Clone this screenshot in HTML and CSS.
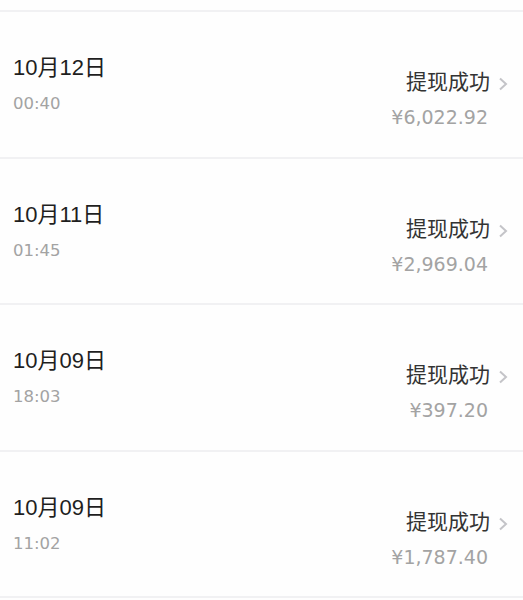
FILE: index.html
```html
<!DOCTYPE html>
<html lang="zh-CN">
<head>
  <meta charset="UTF-8" />
  <meta name="viewport" content="width=device-width, initial-scale=1" />
  <title>提现记录</title>
  <link rel="stylesheet" href="styles.css">
</head>
<body>
  <ul class="records">
    <li class="record">
      <div class="when">
        <p class="date">10月12日</p>
        <p class="time">00:40</p>
      </div>
      <div class="what">
        <p class="status">提现成功<svg class="arrow" viewBox="0 0 10 14"><path d="M2 1.5 L8 7 L2 12.5" /></svg></p>
        <p class="amount">¥6,022.92</p>
      </div>
    </li>
    <li class="record">
      <div class="when">
        <p class="date">10月11日</p>
        <p class="time">01:45</p>
      </div>
      <div class="what">
        <p class="status">提现成功<svg class="arrow" viewBox="0 0 10 14"><path d="M2 1.5 L8 7 L2 12.5" /></svg></p>
        <p class="amount">¥2,969.04</p>
      </div>
    </li>
    <li class="record">
      <div class="when">
        <p class="date">10月09日</p>
        <p class="time">18:03</p>
      </div>
      <div class="what">
        <p class="status">提现成功<svg class="arrow" viewBox="0 0 10 14"><path d="M2 1.5 L8 7 L2 12.5" /></svg></p>
        <p class="amount">¥397.20</p>
      </div>
    </li>
    <li class="record">
      <div class="when">
        <p class="date">10月09日</p>
        <p class="time">11:02</p>
      </div>
      <div class="what">
        <p class="status">提现成功<svg class="arrow" viewBox="0 0 10 14"><path d="M2 1.5 L8 7 L2 12.5" /></svg></p>
        <p class="amount">¥1,787.40</p>
      </div>
    </li>
  </ul>
</body>
</html>
```

FILE: styles.css
```css
body {
  margin: 0;
  background: #fefefe;
  color: #333;
  font-family: "Liberation Sans", "Noto Sans CJK SC", sans-serif;
}
p {
  margin: 0;
}
.records {
  list-style: none;
  margin: 10px 0 0;
  padding: 0;
  border-top: 2px solid #f1f1f3;
}
.record {
  display: flex;
  justify-content: space-between;
  height: 146.5px;
  padding: 42px 15px 0 13px;
  box-sizing: border-box;
  border-bottom: 2px solid #f1f1f3;
}
.date {
  font-size: 22px;
  line-height: 28px;
  color: #1f1f1f;
}
.time {
  font-family: "DejaVu Sans", "Noto Sans CJK SC", sans-serif;
  font-size: 16.5px;
  line-height: 28px;
  margin-top: 8px;
  color: #a3a3a3;
}
.what {
  margin-top: 14px;
  text-align: right;
}
.status {
  font-size: 21px;
  line-height: 28px;
  color: #333;
  display: flex;
  justify-content: flex-end;
  align-items: center;
}
.arrow {
  width: 10px;
  height: 14px;
  margin-left: 8px;
  margin-top: 4px;
  fill: none;
  stroke: #c4c4c8;
  stroke-width: 2;
}
.amount {
  font-family: "DejaVu Sans", "Noto Sans CJK SC", sans-serif;
  font-size: 19px;
  line-height: 28px;
  margin-top: 7px;
  margin-right: 20px;
  color: #a3a3a3;
}
```
